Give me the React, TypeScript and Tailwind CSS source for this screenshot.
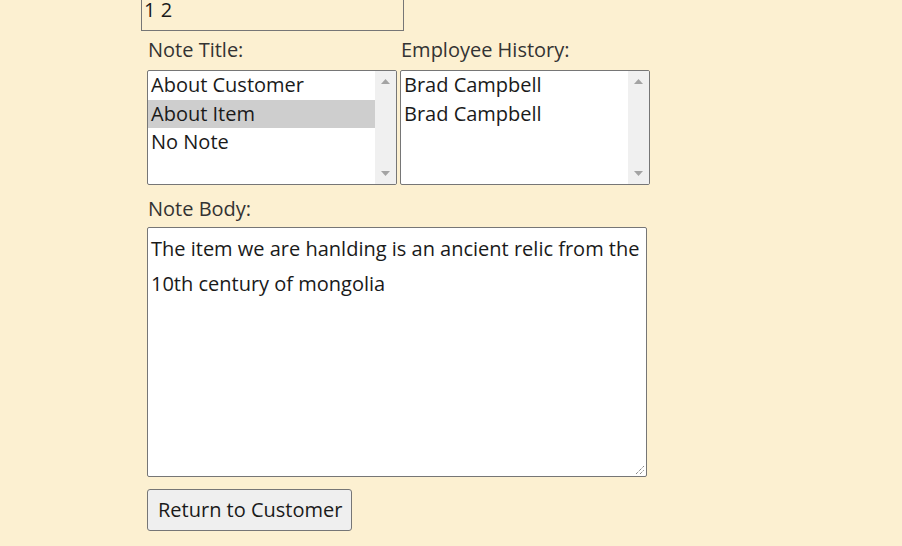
import React from "react";

function ScrollArrows() {
  return (
    <div className="absolute right-0 top-0 bottom-0 w-[21px] bg-[#f0f0f0] flex flex-col justify-between items-center py-[8px]">
      <svg width="9" height="5" viewBox="0 0 9 5"><polygon points="4.5,0 9,5 0,5" fill="#a3a3a3" /></svg>
      <svg width="9" height="5" viewBox="0 0 9 5"><polygon points="0,0 9,0 4.5,5" fill="#a3a3a3" /></svg>
    </div>
  );
}

function ListBox({ items, selected }: { items: string[]; selected?: number }) {
  return (
    <div className="relative w-[250px] h-[115px] border border-[#767676] rounded-[2px] bg-white overflow-hidden">
      <div className="pr-[21px]">
        {items.map((it, i) => (
          <div
            key={i}
            className={
              "h-[28.5px] leading-[28.5px] pl-[3px] text-[#1a1a1a] whitespace-nowrap " +
              (i === selected ? "bg-[#cecece]" : "")
            }
          >
            {it}
          </div>
        ))}
      </div>
      <ScrollArrows />
    </div>
  );
}

export default function App() {
  return (
    <div
      className="w-full h-[546px] overflow-hidden bg-[#fcf0d1] text-[20px] text-[#333]"
      style={{ fontFamily: '"Open Sans", sans-serif' }}
    >
      <div className="pl-[147px] flex flex-col">
        <div className="ml-[-6px] mt-[-10px] w-[263px] h-[41px] border border-[#767676] pl-[2px] pt-[7px] leading-[24px] text-[#1a1a1a]">
          1 2
        </div>
        <div className="flex gap-[3px] mt-[7px]">
          <div className="flex flex-col">
            <div className="pl-[1px] leading-[24px] h-[32px]">Note Title:</div>
            <ListBox items={["About Customer", "About Item", "No Note"]} selected={1} />
          </div>
          <div className="flex flex-col">
            <div className="pl-[1px] leading-[24px] h-[32px]">Employee History:</div>
            <ListBox items={["Brad Campbell", "Brad Campbell"]} />
          </div>
        </div>
        <div className="pl-[1px] leading-[24px] mt-[12px] h-[30px]">Note Body:</div>
        <div className="relative w-[500px] h-[250px] border border-[#767676] rounded-[2px] bg-white pl-[3px] pr-[4px] pt-[3px] text-[#1a1a1a] leading-[35px]">
          The item we are hanlding is an ancient relic from the 10th century of mongolia
          <svg className="absolute right-[1px] bottom-[1px]" width="11" height="11" viewBox="0 0 11 11">
            <line x1="2" y1="10" x2="10" y2="2" stroke="#555" strokeWidth="1" strokeDasharray="1 1" />
            <line x1="6" y1="10" x2="10" y2="6" stroke="#555" strokeWidth="1" strokeDasharray="1 1" />
          </svg>
        </div>
        <button className="mt-[12px] self-start w-[205px] h-[42px] border border-[#767676] rounded-[3px] bg-[#efefef] text-[#1a1a1a] text-left pl-[10px] leading-[24px]">
          Return to Customer
        </button>
      </div>
    </div>
  );
}
